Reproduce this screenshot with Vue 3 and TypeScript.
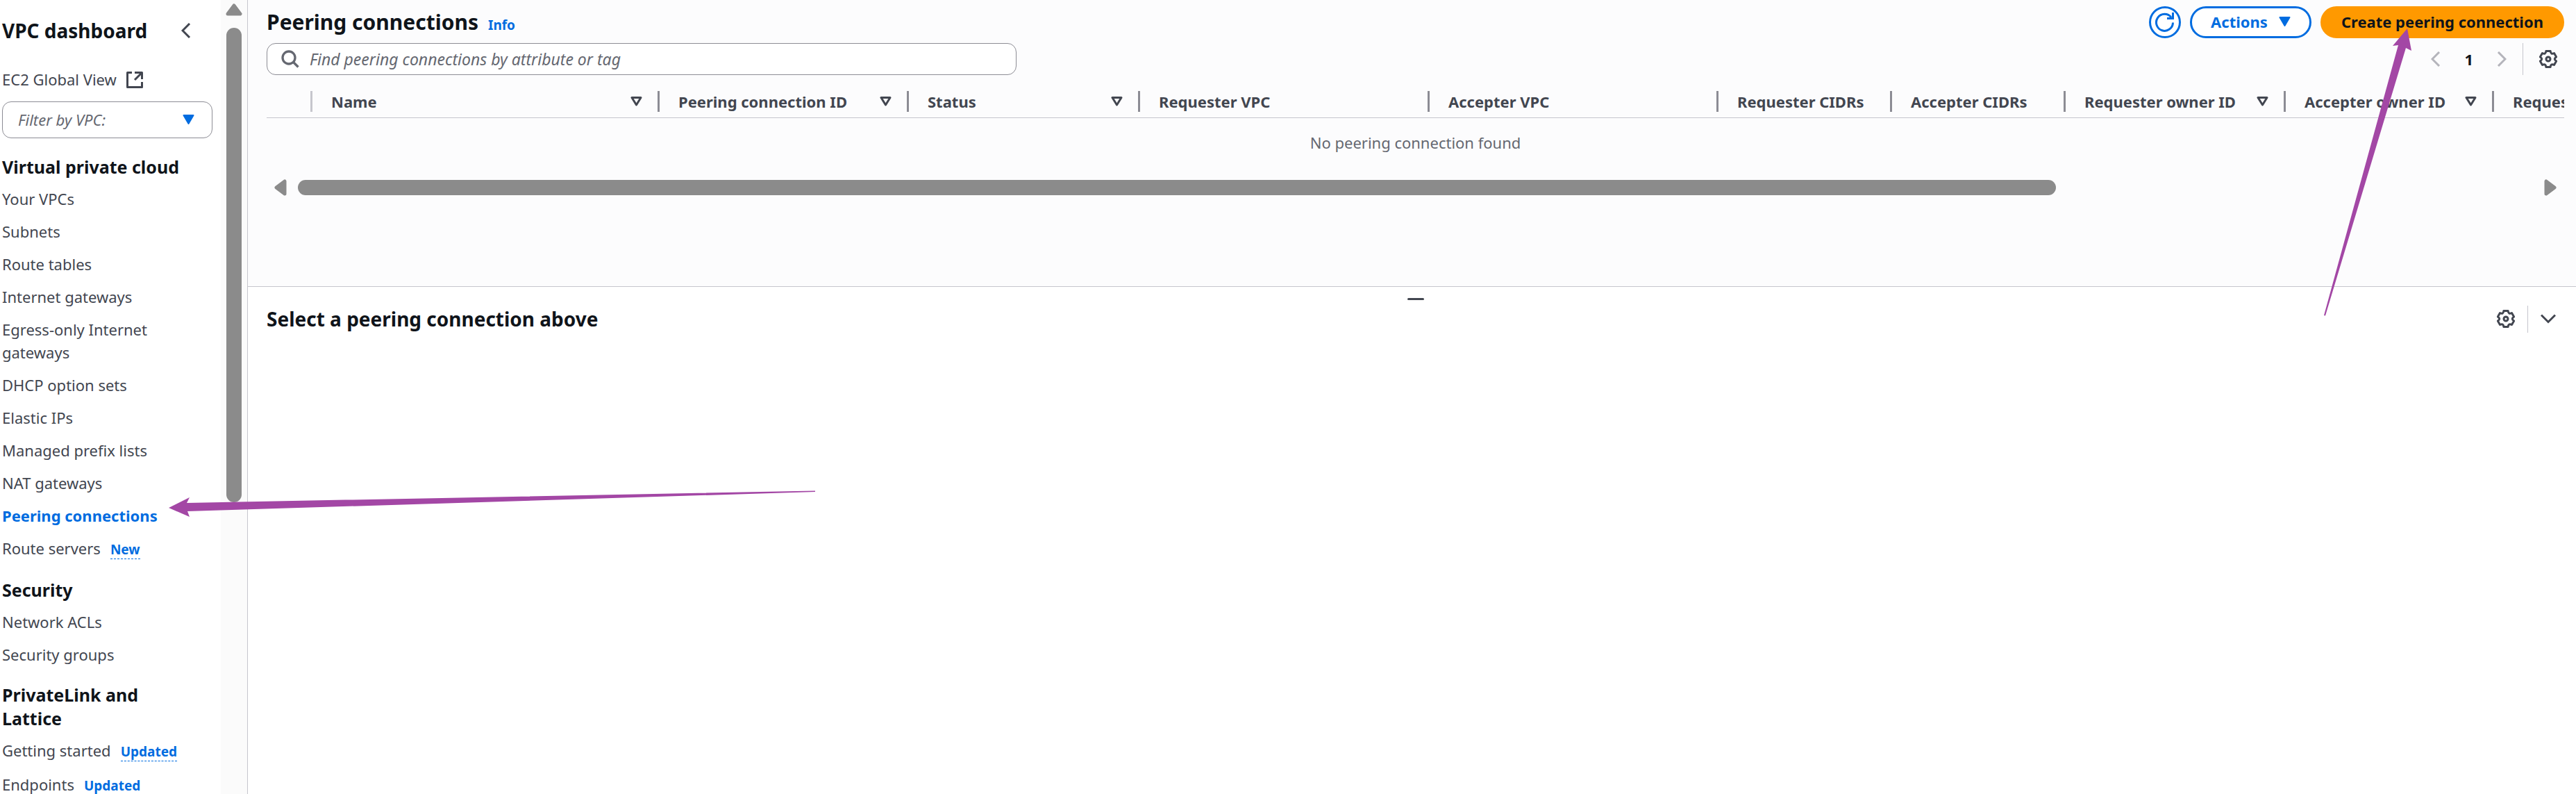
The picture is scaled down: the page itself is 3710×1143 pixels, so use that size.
<script setup lang="ts">
import { onMounted, ref } from 'vue'

interface NavItem { label: string; badge?: string; active?: boolean }
interface NavGroup { title: string; items: NavItem[] }
interface Column { label: string; width: number; sortable?: boolean }

const groups: NavGroup[] = [
  {
    title: 'Virtual private cloud',
    items: [
      { label: 'Your VPCs' },
      { label: 'Subnets' },
      { label: 'Route tables' },
      { label: 'Internet gateways' },
      { label: 'Egress-only Internet gateways' },
      { label: 'DHCP option sets' },
      { label: 'Elastic IPs' },
      { label: 'Managed prefix lists' },
      { label: 'NAT gateways' },
      { label: 'Peering connections', active: true },
      { label: 'Route servers', badge: 'New' },
    ],
  },
  { title: 'Security', items: [{ label: 'Network ACLs' }, { label: 'Security groups' }] },
  {
    title: 'PrivateLink and Lattice',
    items: [
      { label: 'Getting started', badge: 'Updated' },
      { label: 'Endpoints', badge: 'Updated' },
    ],
  },
]

const columns: Column[] = [
  { label: 'Name', width: 500, sortable: true },
  { label: 'Peering connection ID', width: 359, sortable: true },
  { label: 'Status', width: 333, sortable: true },
  { label: 'Requester VPC', width: 417 },
  { label: 'Accepter VPC', width: 416 },
  { label: 'Requester CIDRs', width: 250 },
  { label: 'Accepter CIDRs', width: 250 },
  { label: 'Requester owner ID', width: 317, sortable: true },
  { label: 'Accepter owner ID', width: 300, sortable: true },
  { label: 'Requester Region', width: 999 },
]
const tableWidth = columns.reduce((sum, c) => sum + c.width, 66)

// The horizontal thumb shows which share of the table fits in the view.
const scroller = ref<HTMLElement | null>(null)
const thumb = ref(79)
onMounted(() => {
  if (scroller.value) thumb.value = (100 * scroller.value.clientWidth) / tableWidth
})
</script>

<template>
  <div class="page">
    <aside class="side">
      <nav class="nav" aria-label="VPC">
        <div class="nav-head">
          <h2>VPC dashboard</h2>
          <button class="icon-btn" aria-label="Collapse navigation">
            <svg width="14" height="22" viewBox="0 0 14 22"><path d="M12 1 2 11l10 10" fill="none" stroke="#424650" stroke-width="3" /></svg>
          </button>
        </div>
        <a class="link ext" href="#">EC2 Global View
          <svg width="24" height="24" viewBox="0 0 24 24"><path d="M8 1.500H1.500v21h21V15M12 1.500h10.500V11M22 2 12 12" fill="none" stroke="#424650" stroke-width="3" stroke-linejoin="round" /></svg>
        </a>
        <div class="filter">
          <select aria-label="Filter by VPC"><option>Filter by VPC:</option></select>
          <svg class="caret" width="17" height="14" viewBox="0 0 17 14"><path d="M1.500 1h14L8.500 13z" fill="#006ce0" stroke="#006ce0" stroke-width="2" stroke-linejoin="round" /></svg>
        </div>
        <section v-for="g in groups" :key="g.title" class="group">
          <h3>{{ g.title }}</h3>
          <ul>
            <li v-for="i in g.items" :key="i.label">
              <a class="link" :class="{ active: i.active }" href="#">{{ i.label }}</a>
              <a v-if="i.badge" class="badge" href="#">{{ i.badge }}</a>
            </li>
          </ul>
        </section>
      </nav>
      <div class="vbar" aria-hidden="true">
        <svg width="24" height="18" viewBox="0 0 24 18"><path d="M12 3 21 15H3z" fill="#8b8b8b" stroke="#8b8b8b" stroke-width="5" stroke-linejoin="round" /></svg>
        <div class="vthumb"></div>
      </div>
    </aside>

    <main class="main">
      <section class="list">
        <header class="head">
          <div class="title">
            <h1>Peering connections</h1>
            <a class="info" href="#">Info</a>
          </div>
          <div class="actions">
            <button class="round" aria-label="Refresh">
              <svg width="28" height="28" viewBox="0 0 28 28"><path d="M25.500 14.500A12 12 0 1 1 23 7M25.500 0v8.500H17" fill="none" stroke="#006ce0" stroke-width="3" /></svg>
            </button>
            <button class="btn">Actions
              <svg width="17" height="14" viewBox="0 0 17 14"><path d="M1.500 1h14L8.500 13z" fill="#006ce0" stroke="#006ce0" stroke-width="2" stroke-linejoin="round" /></svg>
            </button>
            <button class="btn primary">Create peering connection</button>
          </div>
        </header>

        <div class="tools">
          <label class="search">
            <svg width="26" height="26" viewBox="0 0 26 26"><circle cx="11" cy="11" r="9" fill="none" stroke="#656871" stroke-width="3.300" /><path d="m17 17 7.500 7.500" stroke="#656871" stroke-width="3.300" /></svg>
            <input type="text" placeholder="Find peering connections by attribute or tag" aria-label="Find peering connections by attribute or tag" />
          </label>
          <div class="pager">
            <button class="icon-btn" aria-label="Previous page" disabled><svg width="14" height="22" viewBox="0 0 14 22"><path d="M12 1 2 11l10 10" fill="none" stroke="#b4b4bb" stroke-width="3" /></svg></button>
            <button class="num">1</button>
            <button class="icon-btn" aria-label="Next page" disabled><svg width="14" height="22" viewBox="0 0 14 22"><path d="m2 1 10 10L2 21" fill="none" stroke="#b4b4bb" stroke-width="3" /></svg></button>
            <span class="rule"></span>
            <button class="icon-btn" aria-label="Preferences"><svg width="26" height="28" viewBox="0 0 26 28"><use href="#gear" /></svg></button>
          </div>
        </div>

        <div ref="scroller" class="scroller">
          <table :style="{ width: tableWidth + 'px' }">
            <colgroup>
              <col class="pick" />
              <col v-for="c in columns" :key="c.label" :style="{ width: c.width + 'px' }" />
            </colgroup>
            <thead>
              <tr>
                <th class="soft"></th>
                <th v-for="c in columns" :key="c.label" scope="col">
                  <div class="cell">
                    <span>{{ c.label }}</span>
                    <button v-if="c.sortable" class="icon-btn" :aria-label="'Sort by ' + c.label">
                      <svg width="17" height="14" viewBox="0 0 17 14"><path d="M2 1.500h13L8.500 12z" fill="none" stroke="#424650" stroke-width="3" stroke-linejoin="round" /></svg>
                    </button>
                  </div>
                </th>
              </tr>
            </thead>
          </table>
        </div>
        <p class="empty">No peering connection found</p>
        <div class="hbar" aria-hidden="true">
          <svg width="18" height="24" viewBox="0 0 18 24"><path d="M3 12 15 3v18z" fill="#8b8b8b" stroke="#8b8b8b" stroke-width="5" stroke-linejoin="round" /></svg>
          <div class="track"><div class="hthumb" :style="{ width: thumb + '%' }"></div></div>
          <svg width="18" height="24" viewBox="0 0 18 24"><path d="M15 12 3 3v18z" fill="#8b8b8b" stroke="#8b8b8b" stroke-width="5" stroke-linejoin="round" /></svg>
        </div>
      </section>

      <section class="detail">
        <div class="grip"></div>
        <header class="detail-head">
          <h2>Select a peering connection above</h2>
          <button class="icon-btn" aria-label="Panel preferences"><svg width="26" height="28" viewBox="0 0 26 28"><use href="#gear" /></svg></button>
          <span class="rule"></span>
          <button class="icon-btn" aria-label="Collapse panel"><svg width="22" height="14" viewBox="0 0 22 14"><path d="m1 1.500 10 10 10-10" fill="none" stroke="#424650" stroke-width="3" /></svg></button>
        </header>
      </section>
    </main>

    <svg class="defs" width="0" height="0" aria-hidden="true">
      <symbol id="gear" viewBox="0 0 26 28">
        <g fill="none" stroke="#424650" stroke-width="3" stroke-linejoin="round">
          <path d="M9.900 2.400h6.200Q16.500 7.900 21.500 5.500L24.600 10.900Q20 14 24.600 17.100L21.500 22.500Q16.500 20.100 16.100 25.600H9.900Q9.500 20.100 4.500 22.500L1.400 17.100Q6 14 1.400 10.900L4.500 5.500Q9.500 7.900 9.900 2.400z" />
          <circle cx="13" cy="14" r="3" />
        </g>
      </symbol>
    </svg>

    <svg class="arrow arrow-nav" width="940" height="40" viewBox="240 706 940 40" aria-hidden="true">
      <path d="M243 731 273 716 269 724 1174 706.500 1174 708 270 736 273 744z" fill="#a347a5" />
    </svg>
    <svg class="arrow arrow-create" width="130" height="416" viewBox="3345 40 130 416" aria-hidden="true">
      <path d="M3467 41 3473 73 3465 69 3349 454.500 3347 454 3454 65 3446 66z" fill="#a347a5" />
    </svg>
  </div>
</template>

<style>
body { margin: 0; background: #fff; }
</style>

<style scoped>
.page {
  position: relative;
  display: flex;
  height: 100vh;
  overflow: hidden;
  background: #fff;
  color: #0f141a;
  font: 22px/33px "Noto Sans", "Open Sans", sans-serif;
}
h1, h2, h3, p, ul { margin: 0; padding: 0; }
ul { list-style: none; }
a { text-decoration: none; }
svg { display: block; flex: none; }
button { margin: 0; padding: 0; border: 0; background: none; font: inherit; color: inherit; }
.icon-btn { display: flex; }

.side { display: flex; flex: none; width: 356px; border-right: 1px solid #c6c6cd; }
.nav { flex: 1; padding: 26px 12px 0 3px; }
.nav-head { display: flex; align-items: center; justify-content: space-between; padding-right: 31px; }
h2 { font-size: 28px; line-height: 36px; }
.link { color: #424650; }
.link.active { color: #006ce0; font-weight: 700; }
.ext { display: flex; align-items: center; gap: 14px; margin-top: 36px; }
.filter { position: relative; margin-top: 15px; }
.filter select {
  width: 100%;
  height: 53px;
  padding: 0 22px;
  border: 1px solid #8c8c94;
  border-radius: 13px;
  background: #fff;
  color: #656871;
  font: inherit;
  font-style: italic;
  appearance: none;
}
.caret { position: absolute; right: 26px; top: 19px; pointer-events: none; }
.group { padding-top: 24px; }
h3 { max-width: 260px; margin-bottom: 13px; font-size: 25px; line-height: 34px; }
.group ul { display: flex; flex-direction: column; gap: 14px; }
.group li { max-width: 270px; }
.badge { margin-left: 14px; border-bottom: 1px dashed #006ce0; color: #006ce0; font-size: 19px; font-weight: 700; }

.vbar { display: flex; flex-direction: column; align-items: center; width: 38px; padding-top: 5px; background: #fbfbfb; }
.vthumb { width: 22px; height: 60%; margin-top: 17px; border-radius: 11px; background: #8b8b8b; }

.main { display: flex; flex: 1; flex-direction: column; min-width: 0; }
.list { padding: 9px 17px 130px 27px; border-bottom: 1px solid #c6c6cd; background: #fcfcfd; }
.head { display: flex; align-items: center; height: 46px; }
.title { display: flex; align-items: baseline; gap: 14px; }
h1 { font-size: 30px; line-height: 46px; }
.info { color: #006ce0; font-size: 19px; font-weight: 700; }
.actions { display: flex; gap: 13px; margin-left: auto; font-weight: 700; }
.round, .btn { display: flex; align-items: center; justify-content: center; height: 46px; border: 3px solid #006ce0; border-radius: 23px; background: #fff; color: #006ce0; }
.round { width: 46px; }
.btn { gap: 16px; padding: 0 27px 2px; }
.primary { border-color: #f90; background: #f90; color: #0f141a; }

.tools { display: flex; align-items: center; justify-content: space-between; margin-top: 7px; }
.search { display: flex; box-sizing: border-box; align-items: center; gap: 15px; width: 1080px; height: 46px; padding: 0 20px; border: 1px solid #8c8c94; border-radius: 13px; background: #fff; }
.search input { flex: 1; min-width: 0; padding: 0; border: 0; outline: 0; background: none; font: inherit; font-size: 23px; }
.search input::placeholder { color: #656871; font-style: italic; opacity: 1; }
.pager { display: flex; align-items: center; padding-right: 10px; }
.num { padding: 0 34px; font-weight: 700; }
.rule { width: 1px; height: 46px; margin: 0 23px; background: #c6c6cd; }

.scroller { overflow: hidden; margin-top: 15px; }
table { border-collapse: collapse; table-layout: fixed; }
.pick { width: 66px; }
th { height: 46px; padding: 0; border-bottom: 1px solid #c6c6cd; color: #424650; font-weight: 700; text-align: left; }
.cell, .soft::after { box-sizing: border-box; }
.cell { display: flex; align-items: center; justify-content: space-between; height: 30px; padding: 0 22px 0 27px; border-right: 3px solid #8c8c94; white-space: nowrap; }
.soft::after { content: ""; display: block; height: 30px; border-right: 3px solid #c6c6cd; }
.empty { margin-top: 19px; color: #656871; text-align: center; }
.hbar { display: flex; align-items: center; justify-content: space-between; gap: 16px; margin-top: 36px; padding: 0 11px; }
.track { flex: 1; }
.hthumb { height: 22px; border-radius: 11px; background: #8b8b8b; }

.detail { flex: 1; padding: 16px 17px 0 27px; }
.grip { width: 24px; height: 3px; margin: 0 auto; border-radius: 2px; background: #424650; }
.detail-head { display: flex; align-items: center; height: 46px; margin-top: 4px; padding-right: 12px; }
.detail-head h2 { margin-right: auto; }
.detail-head .rule { height: 39px; margin: 0 18px; }

.defs { position: absolute; }
.arrow { position: absolute; pointer-events: none; }
.arrow-nav { left: 240px; top: 706px; }
.arrow-create { right: 235px; top: 40px; }
</style>
